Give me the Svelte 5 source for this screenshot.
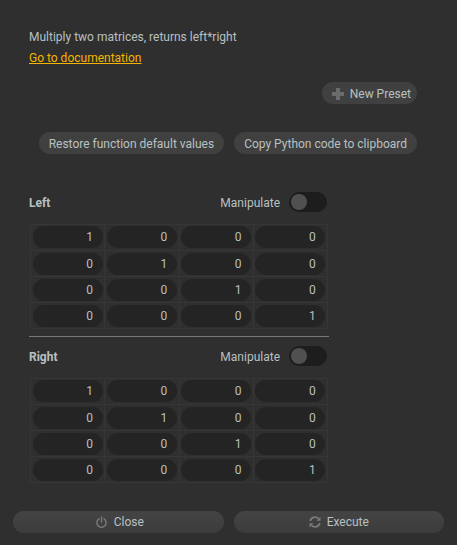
<script>
  const matrices = [{ name: 'Left' }, { name: 'Right' }];
  const rows = [0, 1, 2, 3];
</script>

<div class="panel">
  <p class="desc">Multiply two matrices, returns left*right</p>
  <a class="doc" href="#doc">Go to documentation</a>

  <div class="preset-row">
    <button class="btn preset">
      <svg width="12" height="12" viewBox="0 0 12 12"><path d="M4 0h4v4h4v4h-4v4h-4v-4h-4v-4h4z" fill="#6c6c6c" /></svg>
      New Preset
    </button>
  </div>

  <div class="actions">
    <button class="btn">Restore function default values</button>
    <button class="btn">Copy Python code to clipboard</button>
  </div>

  {#each matrices as m, i}
    {#if i > 0}<hr />{/if}
    <div class="matrix-head">
      <span class="name">{m.name}</span>
      <span class="manip">Manipulate</span>
      <span class="toggle"><span class="knob"></span></span>
    </div>
    <div class="grid">
      {#each rows as r}
        {#each rows as c}
          <div class="cell"><span class="field">{r === c ? 1 : 0}</span></div>
        {/each}
      {/each}
    </div>
  {/each}

  <div class="footer">
    <button class="btn wide close">
      <svg width="11" height="12" viewBox="0 0 11 12" fill="none" stroke="#7a7a7a" stroke-width="1.400" stroke-linecap="round"><path d="M5.500 1v5" /><path d="M3 2.800a4.600 4.600 0 1 0 5 0" /></svg>
      Close
    </button>
    <button class="btn wide">
      <svg width="12" height="12" viewBox="0 0 12 12" fill="none" stroke="#7a7a7a" stroke-width="1.800"><path d="M1.200 5a4.900 4.900 0 0 1 8.300-2.300" /><path d="M10.800 7a4.900 4.900 0 0 1-8.300 2.300" /><path d="M11.500 0.800v4h-4z" fill="#7a7a7a" stroke="none" /><path d="M0.500 11.200v-4h4z" fill="#7a7a7a" stroke="none" /></svg>
      Execute
    </button>
  </div>
</div>

<style>
  :global(body) {
    background: #2f2f2f;
  }

  .panel {
    box-sizing: border-box;
    width: 457px;
    height: 545px;
    padding: 28px 13px 0;
    background: #2f2f2f;
    color: #b8c0c0;
    font-family: Roboto, sans-serif;
    font-size: 12px;
    overflow: hidden;
  }

  .desc {
    margin: 0 0 0 16px;
    line-height: 18px;
  }

  .doc {
    display: block;
    width: max-content;
    margin: 4px 0 0 16px;
    line-height: 16px;
    color: #f5b400;
    text-decoration: underline;
  }

  .btn {
    display: inline-flex;
    align-items: center;
    justify-content: center;
    gap: 6px;
    height: 22px;
    padding: 1px 10px 0;
    border: none;
    border-radius: 11px;
    background: #404040;
    color: #b8c0c0;
    font: inherit;
    white-space: nowrap;
  }

  .preset {
    padding: 1px 6px 0 10px;
  }

  .preset-row {
    display: flex;
    justify-content: flex-end;
    margin: 16px 27px 0 0;
  }

  .actions {
    display: flex;
    justify-content: flex-end;
    gap: 10px;
    margin: 28px 27px 0 0;
  }

  .matrix-head {
    display: flex;
    align-items: center;
    height: 20px;
    margin: 0 117px 0 16px;
  }

  .actions + .matrix-head {
    margin-top: 38px;
  }

  .name {
    flex: 1;
    padding-top: 1px;
    font-weight: 700;
  }

  .manip {
    padding-top: 1px;
  }

  .toggle {
    box-sizing: border-box;
    width: 38px;
    height: 20px;
    margin-left: 9px;
    padding: 2px;
    border-radius: 10px;
    background: #1d1d1d;
  }

  .knob {
    display: block;
    width: 16px;
    height: 16px;
    border-radius: 50%;
    background: #505050;
  }

  .grid {
    display: grid;
    grid-template-columns: repeat(4, 74.250px);
    width: 298px;
    margin: 12px 0 0 17px;
    border-top: 1px solid #363636;
    border-left: 1px solid #363636;
  }

  .cell {
    box-sizing: border-box;
    height: 26px;
    padding: 1px 1.750px 0 1.500px;
    border-right: 1px solid #363636;
    border-bottom: 1px solid #363636;
  }

  .cell:nth-child(n + 5) {
    padding-top: 2px;
  }

  .field {
    display: block;
    height: 22px;
    padding-right: 9.500px;
    border-radius: 11px;
    background: #242424;
    line-height: 23px;
    text-align: right;
  }

  hr {
    height: 1px;
    margin: 7px 115px 9px 16px;
    border: none;
    background: #787878;
  }

  .footer {
    display: flex;
    gap: 10px;
    margin-top: 28px;
  }

  .wide {
    width: 210.500px;
    padding-top: 0;
    background: linear-gradient(#444444, #3c3c3c);
  }

  .close {
    gap: 7px;
    padding-left: 13px;
  }
</style>
